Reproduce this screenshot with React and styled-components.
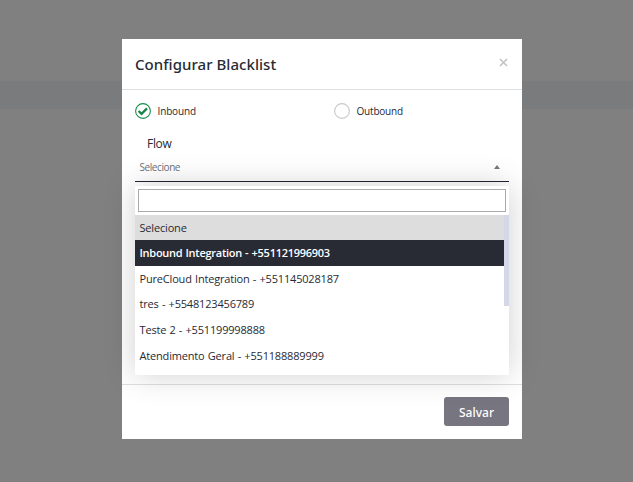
import React from 'react';
import styled, { createGlobalStyle } from 'styled-components';

const GlobalStyle = createGlobalStyle`
  * { box-sizing: border-box; }
  body { margin: 0; background: #808080; font-family: "Open Sans", "Noto Sans", sans-serif; color: #282a34; }
`;

const Backdrop = styled.div`
  height: 482px;
  padding-top: 39px;
  overflow: hidden;
  background: linear-gradient(#808080 81px, #7a7b7d 81px, #7a7b7d 109px, #808080 109px);
`;

const Modal = styled.section`
  display: flex;
  flex-direction: column;
  width: 400px;
  height: 400px;
  margin-left: 122px;
  background: #fff;
`;

const Header = styled.header`
  display: flex;
  align-items: center;
  justify-content: space-between;
  flex: none;
  height: 51px;
  padding: 0 13px;
  border-bottom: 1px solid #dee0e3;
`;

const Title = styled.h1`
  margin: 0 0 1px;
  font-family: "Noto Sans", sans-serif;
  font-size: 15px;
  font-weight: 500;
  line-height: 24px;
  letter-spacing: 0.04px;
`;

const CloseButton = styled.button`
  display: flex;
  padding: 0;
  margin: -4px 1px 0 0;
  border: 0;
  background: none;
`;

const Body = styled.div`
  flex: 1;
  min-height: 0;
  padding: 13px 13px 0;
`;

const RadioGroup = styled.div`
  display: grid;
  grid-template-columns: 199px 1fr;
  height: 16px;
`;

const Radio = styled.label`
  display: flex;
  align-items: center;
  gap: 6.5px;
  font-size: 10px;
  line-height: 16px;
  letter-spacing: ${({ $tracking }) => $tracking};
`;

const FieldLabel = styled.div`
  margin: 16px 0 0 12px;
  font-size: 12px;
  line-height: 18px;
  letter-spacing: -0.3px;
`;

const Select = styled.div`
  display: flex;
  align-items: center;
  justify-content: space-between;
  height: 29px;
  padding: 0 9px 0 4.5px;
  border-bottom: 1px solid #282133;
  color: #6d7078;
  font-size: 10px;
  letter-spacing: -0.42px;
`;

const Dropdown = styled.div`
  position: relative;
  height: 189px;
  margin-top: 4px;
  padding: 3px 0 0;
  background: #fff;
  box-shadow: 0 0 30px rgba(0, 0, 0, 0.19);
`;

const Search = styled.input`
  display: block;
  width: 368px;
  height: 23px;
  margin: 0 3px 3px;
  border: 1px solid #aaa;
  border-radius: 0;
  outline: 0;
  background: #fff;
`;

const OptionArea = styled.div`
  display: flex;
  height: 160px;
`;

const Options = styled.ul`
  flex: 1;
  margin: 0;
  padding: 0;
  list-style: none;
`;

const Option = styled.li`
  height: ${({ $height }) => $height || 26}px;
  padding-left: 4.5px;
  font-size: 11px;
  line-height: ${({ $line, $height }) => $line || $height || 26}px;
  letter-spacing: ${({ $active }) => ($active ? '-0.27px' : '-0.18px')};
  word-spacing: 0.6px;
  font-weight: ${({ $active }) => ($active ? 600 : 400)};
  color: ${({ $active }) => ($active ? '#fff' : '#282a34')};
  background: ${({ $active, $selected }) => ($active ? '#282a34' : $selected ? '#ddd' : '#fff')};
`;

const ScrollThumb = styled.div`
  width: 5px;
  height: 91px;
  background: #d4d7e7;
`;

const Footer = styled.footer`
  display: flex;
  justify-content: flex-end;
  flex: none;
  height: 55px;
  padding: 12px 13px 0;
  border-top: 1px solid #dee0e3;
`;

const SaveButton = styled.button`
  width: 65px;
  height: 29px;
  padding: 2px 0 0;
  border: 0;
  border-radius: 3px;
  background: #767580;
  color: #fff;
  font: 500 12px/27px "Noto Sans", sans-serif;
`;

function RadioMark({ checked }) {
  return (
    <svg width="16" height="16" viewBox="0 0 16 16" fill="none">
      <circle cx="8" cy="8" r="7.4" stroke={checked ? '#158f48' : '#c8c8c8'} strokeWidth="1.1" />
      {checked && <path d="M3.6 8l2.9 2.9 5.5-5.5" stroke="#158244" strokeWidth="2.2" />}
    </svg>
  );
}

const options = [
  { label: 'Selecione', selected: true, height: 25 },
  { label: 'Inbound Integration - +551121996903', active: true },
  { label: 'PureCloud Integration - +551145028187' },
  { label: 'tres - +5548123456789', height: 25, line: 23 },
  { label: 'Teste 2 - +551199998888' },
  { label: 'Atendimento Geral - +551188889999' },
];

export default function App() {
  return (
    <>
      <GlobalStyle />
      <Backdrop>
        <Modal>
          <Header>
            <Title>Configurar Blacklist</Title>
            <CloseButton aria-label="Fechar">
              <svg width="9" height="9" viewBox="0 0 9 9">
                <path d="M1 1l7 7M8 1L1 8" stroke="#c4c4c4" strokeWidth="1.7" />
              </svg>
            </CloseButton>
          </Header>
          <Body>
            <RadioGroup>
              <Radio $tracking="-0.15px"><RadioMark checked />Inbound</Radio>
              <Radio $tracking="-0.2px"><RadioMark />Outbound</Radio>
            </RadioGroup>
            <FieldLabel>Flow</FieldLabel>
            <Select>
              Selecione
              <svg width="6" height="4" viewBox="0 0 6 4"><path d="M0 4L3 0l3 4z" fill="#777" /></svg>
            </Select>
            <Dropdown>
              <Search aria-label="Buscar" />
              <OptionArea>
                <Options>
                  {options.map((o) => (
                    <Option key={o.label} $active={o.active} $selected={o.selected} $height={o.height} $line={o.line}>
                      {o.label}
                    </Option>
                  ))}
                </Options>
                <ScrollThumb />
              </OptionArea>
            </Dropdown>
          </Body>
          <Footer>
            <SaveButton>Salvar</SaveButton>
          </Footer>
        </Modal>
      </Backdrop>
    </>
  );
}
